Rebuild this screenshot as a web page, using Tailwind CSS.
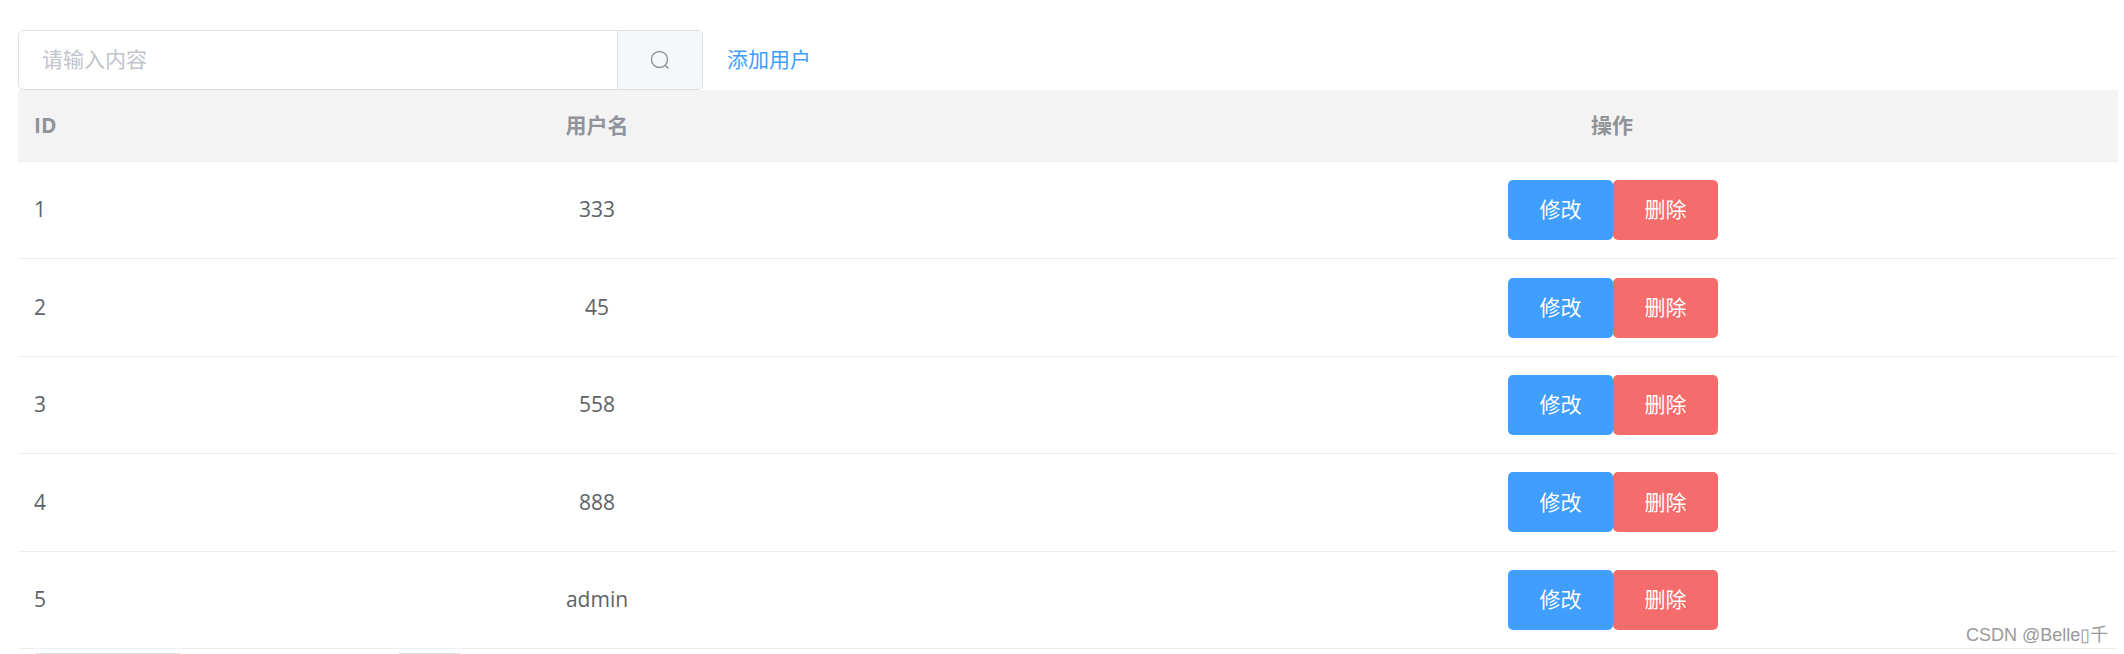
<!DOCTYPE html>
<html lang="zh" class="overflow-hidden">
<head>
  <meta charset="UTF-8">
  <title>用户管理</title>
  <script src="https://cdn.jsdelivr.net/npm/@tailwindcss/browser@4"></script>
</head>
<body class="relative h-[654px] overflow-hidden bg-white font-['Open_Sans','Noto_Sans_CJK_SC',sans-serif] text-[21px] text-[#606266]">
  <div class="pt-[30px] pl-[18px] pr-[6px]">
    <!-- 搜索 -->
    <div class="flex items-center h-[60px]">
      <div class="flex w-[685px] h-[60px] rounded-[5px] border border-[#dcdfe6]">
        <input placeholder="请输入内容" class="flex-1 min-w-0 pl-[23px] rounded-l-[5px] outline-none placeholder:text-[#c0c4cc]">
        <div class="flex items-center justify-center w-[85px] border-l border-[#dcdfe6] bg-[#f5f7fa] rounded-r-[5px]">
          <svg class="w-[20px] h-[20px]" viewBox="0 0 20 20" fill="none" stroke="#909399" stroke-width="1.4">
            <circle cx="9.5" cy="9.5" r="8"/>
            <path d="M15.2 15.2L18.4 18.6"/>
          </svg>
        </div>
      </div>
      <a class="ml-[24px] text-[#409eff]">添加用户</a>
    </div>

    <!-- 表头 -->
    <div class="flex items-center h-[72px] bg-[#f3f3f3] border-b border-[#ebeef5] font-bold text-[#909399]">
      <div class="w-[70px] pl-[16px]">ID</div>
      <div class="w-[1018px] text-center">用户名</div>
      <div class="flex-1 text-center">操作</div>
    </div>

    <!-- 行 -->
    <div class="flex items-center h-[97.4px] border-b border-[#ebeef5]">
      <div class="w-[70px] pl-[16px]">1</div>
      <div class="w-[1018px] text-center">333</div>
      <div class="flex-1 flex justify-center pl-[2px]">
        <button class="w-[105px] h-[60px] rounded-[5px] bg-[#409eff] text-white">修改</button>
        <button class="w-[105px] h-[60px] rounded-[5px] bg-[#f56c6c] text-white">删除</button>
      </div>
    </div>
    <div class="flex items-center h-[97.4px] border-b border-[#ebeef5]">
      <div class="w-[70px] pl-[16px]">2</div>
      <div class="w-[1018px] text-center">45</div>
      <div class="flex-1 flex justify-center pl-[2px]">
        <button class="w-[105px] h-[60px] rounded-[5px] bg-[#409eff] text-white">修改</button>
        <button class="w-[105px] h-[60px] rounded-[5px] bg-[#f56c6c] text-white">删除</button>
      </div>
    </div>
    <div class="flex items-center h-[97.4px] border-b border-[#ebeef5]">
      <div class="w-[70px] pl-[16px]">3</div>
      <div class="w-[1018px] text-center">558</div>
      <div class="flex-1 flex justify-center pl-[2px]">
        <button class="w-[105px] h-[60px] rounded-[5px] bg-[#409eff] text-white">修改</button>
        <button class="w-[105px] h-[60px] rounded-[5px] bg-[#f56c6c] text-white">删除</button>
      </div>
    </div>
    <div class="flex items-center h-[97.4px] border-b border-[#ebeef5]">
      <div class="w-[70px] pl-[16px]">4</div>
      <div class="w-[1018px] text-center">888</div>
      <div class="flex-1 flex justify-center pl-[2px]">
        <button class="w-[105px] h-[60px] rounded-[5px] bg-[#409eff] text-white">修改</button>
        <button class="w-[105px] h-[60px] rounded-[5px] bg-[#f56c6c] text-white">删除</button>
      </div>
    </div>
    <div class="flex items-center h-[97.4px] border-b border-[#ebeef5]">
      <div class="w-[70px] pl-[16px]">5</div>
      <div class="w-[1018px] text-center">admin</div>
      <div class="flex-1 flex justify-center pl-[2px]">
        <button class="w-[105px] h-[60px] rounded-[5px] bg-[#409eff] text-white">修改</button>
        <button class="w-[105px] h-[60px] rounded-[5px] bg-[#f56c6c] text-white">删除</button>
      </div>
    </div>

    <!-- 分页 (被裁切) -->
    <div class="flex h-[1px] overflow-hidden mt-[4px] pl-[15px]">
      <div class="w-[150px] h-[40px] rounded-[4px] border border-[#dcdfe6]"></div>
      <div class="w-[67px] h-[40px] ml-[213px] rounded-[4px] border border-[#dcdfe6]"></div>
    </div>
  </div>

  <!-- 水印 -->
  <div class="absolute left-[1966px] top-[623px] text-[18px] leading-[24px] text-[#999] [text-shadow:0_0_1px_#fff] font-['Liberation_Sans','Noto_Sans_CJK_SC',sans-serif] whitespace-nowrap">CSDN @Belle▯千</div>
</body>
</html>
